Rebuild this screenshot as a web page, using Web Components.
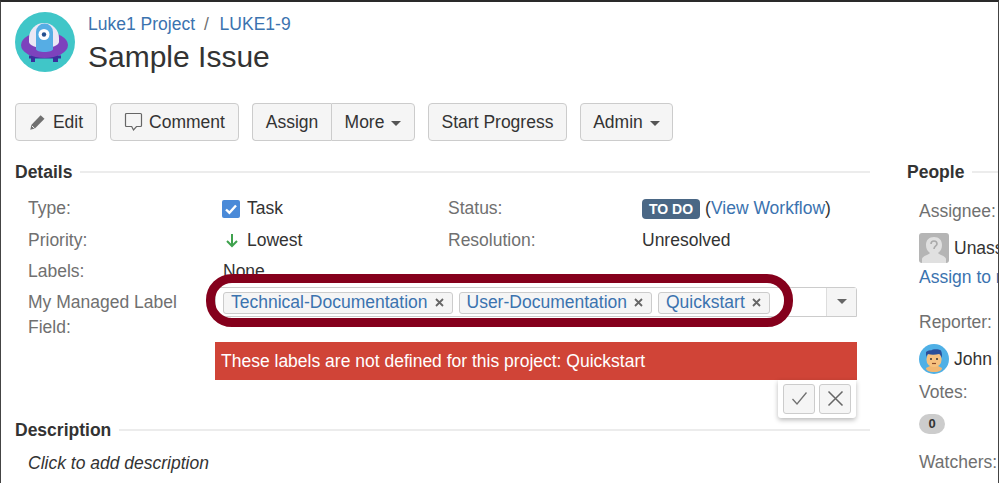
<!DOCTYPE html>
<html>
<head>
<meta charset="utf-8">
<title>Sample Issue</title>
<style>
  html, body { margin: 0; padding: 0; background: #fff; }
</style>
</head>
<body>
<issue-page></issue-page>
<script>
const BASE_FONT = `"Liberation Sans", Arial, sans-serif`;

class IssueButton extends HTMLElement {
  constructor() {
    super();
    this.attachShadow({ mode: "open" });
    const caret = this.hasAttribute("caret")
      ? `<span class="caret"></span>`
      : "";
    this.shadowRoot.innerHTML = `
      <style>
        :host {
          display: inline-flex;
          align-items: center;
          justify-content: center;
          box-sizing: border-box;
          height: 38px;
          padding: 0 12px;
          gap: 6px;
          background: #f5f5f5;
          border: 1.5px solid #ccc;
          border-radius: 4px;
          color: #333;
          font-size: 17.5px;
          white-space: nowrap;
        }
        :host([joined-left]) { border-radius: 4px 0 0 4px; border-right: 0; }
        :host([joined-right]) { border-radius: 0 4px 4px 0; }
        .caret {
          width: 0;
          height: 0;
          margin-left: 1px;
          margin-top: 2px;
          border-left: 5px solid transparent;
          border-right: 5px solid transparent;
          border-top: 5px solid #555;
        }
      </style>
      <slot name="icon"></slot><slot></slot>${caret}`;
  }
}

class IssueHeader extends HTMLElement {
  constructor() {
    super();
    this.attachShadow({ mode: "open" });
    this.shadowRoot.innerHTML = `
      <style>
        :host { display: flex; align-items: flex-start; gap: 13px; padding: 10px 0 0 14px; }
        svg { display: block; flex: none; }
        .crumbs { font-size: 17.5px; line-height: 24px; color: #3b73af; white-space: nowrap; }
        .crumbs i { font-style: normal; color: #707070; margin: 0 6px 0 4px; }
        h1 { margin: 2px 0 0; font-size: 30px; line-height: 38px; font-weight: 400; color: #333; }
      </style>
      <svg width="60" height="60" viewBox="0 0 60 60">
        <circle cx="30" cy="30" r="30" fill="#40c6c8"/>
        <path d="M16 42h4v8h-4zM38 42h5v8h-5z" fill="#3b2f9e"/>
        <path d="M14 43.500h32v3H14z" fill="#3b2f9e"/>
        <ellipse cx="29.500" cy="33" rx="23.500" ry="13" fill="#7d42bd"/>
        <path d="M14 26a15 15 0 0 1 30 0v4c0 3-7 6-15 6s-15-3-15-6z" fill="#ebe8f5"/>
        <path d="M21 20a8.500 8.500 0 0 1 17 0v17c0 2-4 3-8.500 3S21 39 21 37z" fill="#56ade4"/>
        <circle cx="29" cy="22.500" r="5.500" fill="#fff"/>
        <circle cx="29" cy="22.500" r="2.200" fill="#24508f"/>
      </svg>
      <div>
        <div class="crumbs">Luke1 Project <i>/</i> LUKE1-9</div>
        <h1>Sample Issue</h1>
      </div>`;
  }
}

class IssueToolbar extends HTMLElement {
  constructor() {
    super();
    this.attachShadow({ mode: "open" });
    this.shadowRoot.innerHTML = `
      <style>
        :host { display: flex; gap: 13px; padding: 0 0 0 14px; margin-top: 27px; }
        .group { display: flex; }
        svg { display: block; }
      </style>
      <issue-button style="width:82px;gap:7px">
        <svg slot="icon" width="17" height="17" viewBox="0 0 17 17"><path d="M11.600 1.200l3.900 3.600-9.600 9.600-4.600 1.300 1-4.700z" fill="#707070"/><path d="M2.800 11.800l2.900 2.700" stroke="#f5f5f5" stroke-width="1"/></svg>
        Edit
      </issue-button>
      <issue-button style="width:129px">
        <svg slot="icon" width="19" height="20" viewBox="0 0 19 20"><path d="M2.500 1.500h14a1 1 0 0 1 1 1v11a1 1 0 0 1-1 1h-4l-3 3.500-1.800-3.500H2.500a1 1 0 0 1-1-1v-11a1 1 0 0 1 1-1z" fill="none" stroke="#666" stroke-width="1.200"/></svg>
        Comment
      </issue-button>
      <div class="group">
        <issue-button joined-left style="width:79px">Assign</issue-button>
        <issue-button joined-right caret style="width:84px">More</issue-button>
      </div>
      <issue-button style="width:139px">Start Progress</issue-button>
      <issue-button caret style="width:93px">Admin</issue-button>`;
  }
}

class ModuleHeading extends HTMLElement {
  constructor() {
    super();
    this.attachShadow({ mode: "open" });
    this.shadowRoot.innerHTML = `
      <style>
        :host { display: flex; align-items: center; gap: 8px; font-size: 17.5px; line-height: 22px; font-weight: 700; color: #333; white-space: nowrap; }
        i { flex: 1; height: 2px; background: #ececec; }
      </style>
      <slot></slot><i></i>`;
  }
}

class LabelChip extends HTMLElement {
  constructor() {
    super();
    this.attachShadow({ mode: "open" });
    this.shadowRoot.innerHTML = `
      <style>
        :host {
          display: inline-flex;
          align-items: center;
          gap: 7px;
          box-sizing: border-box;
          height: 22px;
          padding: 0 8px 0 7px;
          background: #f5f5f5;
          border: 1px solid #ccc;
          border-radius: 3px;
          color: #3b73af;
          font-size: 17.5px;
          white-space: nowrap;
        }
        svg { display: block; }
      </style>
      <slot></slot>
      <svg width="9" height="9" viewBox="0 0 9 9"><path d="M1 1l7 7M8 1L1 8" stroke="#666" stroke-width="1.800"/></svg>`;
  }
}

class LabelPicker extends HTMLElement {
  constructor() {
    super();
    this.attachShadow({ mode: "open" });
    this.shadowRoot.innerHTML = `
      <style>
        :host {
          display: flex;
          box-sizing: border-box;
          height: 30px;
          background: #fff;
          border: 1px solid #ccc;
          border-radius: 3px 3px 0 0;
        }
        .chips { flex: 1; display: flex; align-items: center; gap: 6px; padding: 2px 0 0 7px; }
        .drop { width: 29px; display: flex; align-items: center; justify-content: center; background: #f5f5f5; border-left: 1px solid #ddd; }
        .drop span { width: 0; height: 0; border-left: 5px solid transparent; border-right: 5px solid transparent; border-top: 5px solid #666; }
      </style>
      <div class="chips"><slot></slot></div>
      <div class="drop"><span></span></div>`;
  }
}

class DetailsModule extends HTMLElement {
  constructor() {
    super();
    this.attachShadow({ mode: "open" });
    this.shadowRoot.innerHTML = `
      <style>
        :host { display: block; font-size: 17.5px; color: #333; }
        .fields { display: grid; grid-template-columns: 195px 225px 194px 1fr; grid-auto-rows: 31.5px; align-items: center; padding: 10px 0 0 13px; }
        .k { color: #707070; }
        .v { display: flex; align-items: center; gap: 6px; white-space: nowrap; }
        .v svg { display: block; }
        .loz { display: inline-block; box-sizing: border-box; height: 20px; line-height: 20px; padding: 0 7px; background: #4a6785; color: #fff; border-radius: 4px; font-size: 14px; font-weight: 700; }
        a { color: #3b73af; }
        .edit { display: grid; grid-template-columns: 187px 642px; padding-left: 13px; margin-top: -1px; }
        .edit .k { line-height: 25px; margin-top: 3px; }
        .err { height: 38px; line-height: 38px; margin-top: 25px; padding-left: 6px; background: #d04437; color: #fff; }
        .save { display: flex; gap: 4px; width: 78px; box-sizing: border-box; height: 38px; margin: 0 1px 0 auto; padding: 4px 5px 0; background: #fff; border-radius: 0 0 3px 3px; box-shadow: 0 2px 5px rgba(0,0,0,.28); }
        .save span { flex: 1; height: 30px; display: flex; align-items: center; justify-content: center; background: #f5f5f5; border: 1px solid #ccc; border-radius: 3px; box-sizing: border-box; }
      </style>
      <module-heading>Details</module-heading>
      <div class="fields">
        <div class="k">Type:</div>
        <div class="v" style="margin-left:-1px;gap:7px">
          <svg width="18" height="18" viewBox="0 0 18 18"><rect width="18" height="18" rx="2" fill="#4a8ad8"/><path d="M4 9.500l3.400 3.200L14 5.500" fill="none" stroke="#fff" stroke-width="2.400"/></svg>Task
        </div>
        <div class="k">Status:</div>
        <div class="v" style="gap:5px"><span class="loz">TO DO</span><span>(<a>View Workflow</a>)</span></div>
        <div class="k">Priority:</div>
        <div class="v">
          <svg width="18" height="18" viewBox="0 0 18 18"><path d="M9 3v12M4 10l5 5 5-5" fill="none" stroke="#3fa24e" stroke-width="2"/></svg>Lowest
        </div>
        <div class="k">Resolution:</div>
        <div class="v">Unresolved</div>
        <div class="k">Labels:</div>
        <div class="v">None</div>
        <div></div><div></div>
      </div>
      <div class="edit">
        <div class="k">My Managed Label Field:</div>
        <div>
          <label-picker>
            <label-chip>Technical-Documentation</label-chip>
            <label-chip>User-Documentation</label-chip>
            <label-chip>Quickstart</label-chip>
          </label-picker>
          <div class="err">These labels are not defined for this project: Quickstart</div>
          <div class="save">
            <span><svg width="17" height="15" viewBox="0 0 17 15"><path d="M1.500 8l4.500 5L15.500 1.500" fill="none" stroke="#707070" stroke-width="1.300"/></svg></span>
            <span><svg width="17" height="17" viewBox="0 0 17 17"><path d="M1.500 1.500l14 14M15.500 1.500l-14 14" fill="none" stroke="#666" stroke-width="1.500"/></svg></span>
          </div>
        </div>
      </div>`;
  }
}

class DescriptionModule extends HTMLElement {
  constructor() {
    super();
    this.attachShadow({ mode: "open" });
    this.shadowRoot.innerHTML = `
      <style>
        :host { display: block; margin-top: 1px; font-size: 17.5px; color: #333; }
        p { margin: 11px 0 0 13px; font-style: italic; line-height: 23px; }
      </style>
      <module-heading>Description</module-heading>
      <p>Click to add description</p>`;
  }
}

class PeoplePanel extends HTMLElement {
  constructor() {
    super();
    this.attachShadow({ mode: "open" });
    this.shadowRoot.innerHTML = `
      <style>
        :host { display: block; width: 200px; flex: none; font-size: 17.5px; color: #333; white-space: nowrap; }
        .body { padding-left: 12px; line-height: 24px; }
        .k { color: #707070; }
        .who { display: flex; align-items: center; gap: 5px; height: 30px; }
        .who svg { display: block; flex: none; }
        a { color: #3b73af; display: block; }
        .badge { width: 26px; height: 20px; line-height: 20px; text-align: center; background: #ccc; border-radius: 10px; font-size: 13px; font-weight: 700; color: #333; }
      </style>
      <module-heading>People</module-heading>
      <div class="body">
        <div class="k" style="margin-top:16px">Assignee:</div>
        <div class="who" style="margin-top:10px">
          <svg width="30" height="30" viewBox="0 0 30 30"><rect width="30" height="30" rx="3" fill="#b5b5b5"/><path d="M3 30v-4c0-3 7-4 8-6-3-2-4-5-4-8 0-5 3-8 8-8s8 3 8 8c0 3-1 6-4 8 1 2 8 3 8 6v4z" fill="#e0e0e0"/><path d="M12 11c0-4 6-4 6 0 0 2-3 2-3 5" fill="none" stroke="#aaa" stroke-width="1.600"/></svg>
          Unassigned
        </div>
        <a style="margin-top:2px">Assign to me</a>
        <div class="k" style="margin-top:21px">Reporter:</div>
        <div class="who" style="margin-top:10px">
          <svg width="30" height="30" viewBox="0 0 30 30"><circle cx="15" cy="15" r="15" fill="#4fb0e6"/><path d="M15 28c-6 0-8-2-8-4l4-2h8l4 2c0 2-2 4-8 4z" fill="#f2b872"/><rect x="7.500" y="8" width="15" height="15" rx="7" fill="#f7c27f"/><path d="M7 14V8c2-1 3-2 5-1.500 2-2 8-1.500 10 0 1 2 1 5 1 7.500-1-2-2-4-3-4-4 1-8 1-11 0-1 1-2 2-2 4z" fill="#2a4f9a"/><circle cx="12" cy="15" r="1" fill="#333"/><circle cx="18" cy="15" r="1" fill="#333"/><path d="M13 19.500h4" stroke="#8a4a2a" stroke-width="1.200"/></svg>
          John Doe
        </div>
        <div class="k" style="margin-top:6px">Votes:</div>
        <div class="badge" style="margin-top:10px">0</div>
        <div class="k" style="margin-top:16px">Watchers:</div>
      </div>`;
  }
}

class IssuePage extends HTMLElement {
  constructor() {
    super();
    this.attachShadow({ mode: "open" });
    this.shadowRoot.innerHTML = `
      <style>
        :host {
          display: block;
          position: relative;
          box-sizing: border-box;
          width: 999px;
          height: 483px;
          overflow: hidden;
          background: #fff;
          border-top: 2px solid #2a2a2a;
          border-left: 1px solid #444;
          border-right: 1px solid #444;
          font-family: ${BASE_FONT};
        }
        .cols { display: flex; gap: 37px; margin-top: 20px; padding-left: 14px; }
        .main { width: 855px; flex: none; }
        .oval {
          position: absolute;
          left: 205px;
          top: 272px;
          width: 587px;
          height: 53px;
          box-sizing: border-box;
          border: 9px solid #85001c;
          border-radius: 26px;
        }
      </style>
      <issue-header></issue-header>
      <issue-toolbar></issue-toolbar>
      <div class="cols">
        <div class="main">
          <details-module></details-module>
          <description-module></description-module>
        </div>
        <people-panel></people-panel>
      </div>
      <div class="oval"></div>`;
  }
}

customElements.define("issue-button", IssueButton);
customElements.define("issue-header", IssueHeader);
customElements.define("issue-toolbar", IssueToolbar);
customElements.define("module-heading", ModuleHeading);
customElements.define("label-chip", LabelChip);
customElements.define("label-picker", LabelPicker);
customElements.define("details-module", DetailsModule);
customElements.define("description-module", DescriptionModule);
customElements.define("people-panel", PeoplePanel);
customElements.define("issue-page", IssuePage);
</script>
</body>
</html>
